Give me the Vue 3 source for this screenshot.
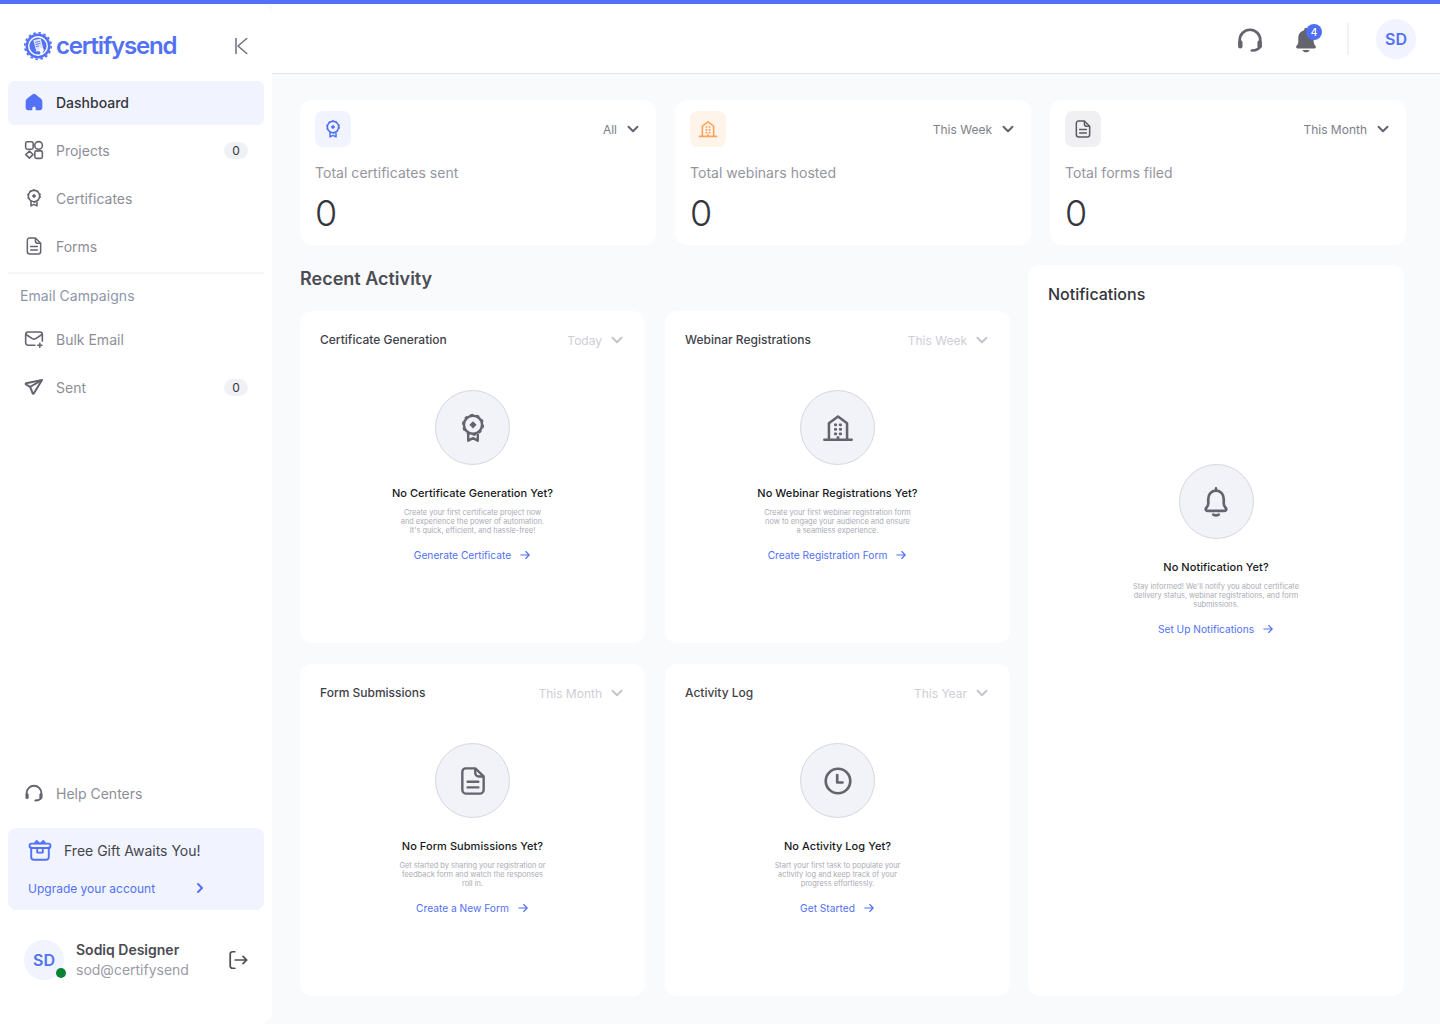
<script setup>
const mainNav = [
  { label: 'Dashboard', icon: 'i-home', active: true },
  { label: 'Projects', icon: 'i-grid', badge: '0' },
  { label: 'Certificates', icon: 'i-seal' },
  { label: 'Forms', icon: 'i-doc' },
]
const mailNav = [
  { label: 'Bulk Email', icon: 'i-mail' },
  { label: 'Sent', icon: 'i-plane', badge: '0' },
]
const stats = [
  { label: 'Total certificates sent', range: 'All', icon: 'i-seal', tone: 'blue' },
  { label: 'Total webinars hosted', range: 'This Week', icon: 'i-building', tone: 'orange' },
  { label: 'Total forms filed', range: 'This Month', icon: 'i-doc', tone: 'grey' },
]
const panels = [
  { title: 'Certificate Generation', range: 'Today', icon: 'i-seal', heading: 'No Certificate Generation Yet?',
    lines: ['Create your first certificate project now', 'and experience the power of automation.', "It's quick, efficient, and hassle-free!"], link: 'Generate Certificate' },
  { title: 'Webinar Registrations', range: 'This Week', icon: 'i-building', heading: 'No Webinar Registrations Yet?',
    lines: ['Create your first webinar registration form', 'now to engage your audience and ensure', 'a seamless experience.'], link: 'Create Registration Form' },
  { title: 'Form Submissions', range: 'This Month', icon: 'i-doc', heading: 'No Form Submissions Yet?',
    lines: ['Get started by sharing your registration or', 'feedback form and watch the responses', 'roll in.'], link: 'Create a New Form' },
  { title: 'Activity Log', range: 'This Year', icon: 'i-clock', heading: 'No Activity Log Yet?',
    lines: ['Start your first task to populate your', 'activity log and keep track of your', 'progress effortlessly.'], link: 'Get Started' },
]
const notice = {
  icon: 'i-bell', heading: 'No Notification Yet?',
  lines: ['Stay informed! We\'ll notify you about certificate', 'delivery status, webinar registrations, and form', 'submissions.'], link: 'Set Up Notifications',
}
</script>

<template>
  <div class="app">
    <svg class="sprite" xmlns="http://www.w3.org/2000/svg">
      <symbol id="i-home" viewBox="0 0 24 24">
        <path fill="currentColor" d="M10.400 2.600 3.900 7.800C2.700 8.700 2 10.100 2 11.600V19c0 1.700 1.300 3 3 3h5v-2.500a2 2 0 0 1 4 0V22h5c1.700 0 3-1.300 3-3v-7.400c0-1.500-.7-2.900-1.900-3.800l-6.500-5.200a2.600 2.600 0 0 0-3.200 0Z" />
      </symbol>
      <symbol id="i-grid" viewBox="0 0 24 24">
        <g fill="none" stroke="currentColor" stroke-width="1.900">
          <rect x="2" y="2" width="9" height="9" rx="2" />
          <circle cx="17.500" cy="6.500" r="4.600" />
          <path d="M6.500 13.200 10.800 17.500 6.500 21.800 2.200 17.500Z" stroke-linejoin="round" />
          <rect x="13" y="13" width="9" height="9" rx="2" />
        </g>
      </symbol>
      <symbol id="i-seal" viewBox="0 0 24 24">
        <g fill="none" stroke="currentColor">
          <circle cx="12" cy="9.600" r="6.800" stroke-width="1.900" />
          <circle cx="12" cy="9.600" r="7.700" stroke-width="1.200" stroke-dasharray="2.400 2.440" />
          <path d="M8.400 16.400V21.500L12 19.600l3.600 1.900v-5.100" stroke-width="1.800" stroke-linejoin="round" />
        </g>
        <path fill="currentColor" d="M12 6.900 14.700 9.600 12 12.300 9.300 9.600Z" />
      </symbol>
      <symbol id="i-doc" viewBox="0 0 24 24">
        <path fill="none" stroke="currentColor" stroke-width="1.800" stroke-linejoin="round" d="M6.500 2.500h7.200L20 8.600V18.500a3 3 0 0 1-3 3H7a3 3 0 0 1-3-3V5a2.500 2.500 0 0 1 2.500-2.500Z" />
        <path fill="none" stroke="currentColor" stroke-width="1.800" stroke-linejoin="round" d="M13.700 2.500V6a2.600 2.600 0 0 0 2.600 2.600H20" />
        <path fill="none" stroke="currentColor" stroke-width="1.800" stroke-linecap="round" d="M8 12.600h8M8 16.800h8" />
      </symbol>
      <symbol id="i-mail" viewBox="0 0 24 24">
        <g fill="none" stroke="currentColor" stroke-width="1.900" stroke-linecap="round" stroke-linejoin="round">
          <path d="M13 19.500H5a3 3 0 0 1-3-3V6.500a3 3 0 0 1 3-3h14a3 3 0 0 1 3 3v8" />
          <path d="M2.400 6.600 10 11.600a3.600 3.600 0 0 0 4 0l7.600-5" />
          <path d="M19 17v5M16.500 19.500h5" />
        </g>
      </symbol>
      <symbol id="i-plane" viewBox="0 0 24 24">
        <g fill="none" stroke="currentColor" stroke-width="2.400" stroke-linejoin="round">
          <path d="M21.600 3.600 2.600 7.500c-.7.2-.8 1-.2 1.400l5 2.900 3 7.800c.3.700 1.200.7 1.500 0Z" />
          <path d="M7.600 11.700 21.400 3.800" />
        </g>
      </symbol>
      <symbol id="i-headset" viewBox="0 0 24 24">
        <g fill="none" stroke="currentColor" stroke-width="2.300" stroke-linecap="round">
          <path d="M3.200 14.500V12a8.800 8.800 0 0 1 17.600 0v3" />
          <path d="M20.600 17.500c-.8 2-3 3.300-7 3.500" />
        </g>
        <rect x="1.800" y="12.200" width="3.800" height="7" rx="1.900" fill="currentColor" />
        <rect x="18.400" y="12.200" width="3.800" height="7" rx="1.900" fill="currentColor" />
      </symbol>
      <symbol id="i-gift" viewBox="0 0 24 24">
        <g fill="none" stroke="currentColor" stroke-width="1.900" stroke-linejoin="round" stroke-linecap="round">
          <path d="M3.200 9.500V19a2.800 2.800 0 0 0 2.800 2.800h12a2.800 2.800 0 0 0 2.800-2.800V9.500" />
          <rect x="1.600" y="5.600" width="20.800" height="4.400" rx="1.600" />
          <path d="M7 5.400 8.600 3l2.600 2.400M17 5.400 15.400 3l-2.600 2.400" />
          <path d="M9.200 10v4.600h5.600V10" />
        </g>
      </symbol>
      <symbol id="i-logout" viewBox="0 0 24 24">
        <g fill="none" stroke="currentColor" stroke-width="1.900" stroke-linecap="round" stroke-linejoin="round">
          <path d="M8.500 3H6a2.500 2.500 0 0 0-2.500 2.500v13A2.500 2.500 0 0 0 6 21h2.500" />
          <path d="M9 12h12.500M17.500 8l4 4-4 4" />
        </g>
      </symbol>
      <symbol id="i-building" viewBox="0 0 24 24">
        <g fill="none" stroke="currentColor" stroke-width="1.900" stroke-linecap="round" stroke-linejoin="round">
          <path d="M5.200 20.500V8.500L12 3.400l6.800 5.100v12" />
          <path d="M1.800 20.800h20.400" stroke-width="2" />
        </g>
        <g fill="currentColor">
          <rect x="9" y="8.600" width="2.300" height="2" rx=".6" /><rect x="12.700" y="8.600" width="2.300" height="2" rx=".6" />
          <rect x="9" y="12" width="2.300" height="2" rx=".6" /><rect x="12.700" y="12" width="2.300" height="2" rx=".6" />
          <rect x="9" y="15.400" width="2.300" height="2" rx=".6" /><rect x="12.700" y="15.400" width="2.300" height="2" rx=".6" />
          <rect x="11" y="18.200" width="2" height="2.600" />
        </g>
      </symbol>
      <symbol id="i-clock" viewBox="0 0 24 24">
        <g fill="none" stroke="currentColor" stroke-width="2" stroke-linecap="round" stroke-linejoin="round">
          <circle cx="12" cy="12" r="9.200" />
          <path d="M11.400 7.500v5.600h4" />
        </g>
      </symbol>
      <symbol id="i-bell" viewBox="0 0 24 24">
        <g fill="none" stroke="currentColor" stroke-width="2" stroke-linejoin="round" stroke-linecap="round">
          <path d="M12 3.500c-3.600 0-5.800 2.800-5.800 6.200v3.600c0 1.400-.6 2.200-1.500 3.200-.8.900-.3 2.200 1 2.200h12.600c1.300 0 1.800-1.300 1-2.200-.9-1-1.500-1.800-1.500-3.200V9.700c0-3.400-2.200-6.200-5.800-6.200Z" />
          <path d="M12 1.800v1.700M10 21.400c1.300.8 2.700.8 4 0" />
        </g>
      </symbol>
      <symbol id="i-bell-fill" viewBox="0 0 24 24">
        <path fill="currentColor" d="M12 1.500a1.500 1.500 0 0 0-1.500 1.500v.6C7.400 4.400 5.400 7 5.400 10v3.800c0 1.300-.6 2.300-1.500 3.200-.8.900-.3 2.300 1 2.300h14.200c1.300 0 1.800-1.400 1-2.300-.9-.9-1.500-1.900-1.500-3.200V10c0-3-2-5.600-5.100-6.400V3A1.500 1.500 0 0 0 12 1.500Z" />
        <path fill="currentColor" d="M9 20.500h6c-.4 1.300-1.600 2.100-3 2.100s-2.600-.8-3-2.100Z" />
      </symbol>
      <symbol id="i-chev" viewBox="0 0 14 14">
        <path fill="none" stroke="currentColor" stroke-width="2" stroke-linecap="round" stroke-linejoin="round" d="M2.500 4.800 7 9.200l4.500-4.400" />
      </symbol>
      <symbol id="i-arrow" viewBox="0 0 12 12">
        <path fill="none" stroke="currentColor" stroke-width="1.100" stroke-linecap="round" stroke-linejoin="round" d="M1.800 6h8.400M6.700 2.500 10.200 6 6.700 9.500" />
      </symbol>
    </svg>

    <div class="topline"></div>
    <div class="shell">
      <aside class="sidebar">
        <div class="brand">
          <div class="logo">
            <svg class="logo-mark" viewBox="0 0 28 28">
              <circle cx="14" cy="14" r="12.500" fill="#5271f4" />
              <circle cx="14" cy="14" r="13.200" fill="none" stroke="#5271f4" stroke-width="1.600" stroke-dasharray="2.600 2.580" />
              <circle cx="14" cy="14" r="10" fill="#fff" />
              <circle cx="14" cy="14" r="8.600" fill="#5271f4" />
              <path d="M9.300 8.200 16.800 6.500 19.600 18 12.400 19.800Z" fill="#dfe5fe" />
              <path d="M11 10.400l5-1.100M11.500 12.500l5-1.100M12 14.600l3-.7" stroke="#5271f4" stroke-width=".9" />
              <circle cx="17.500" cy="18.200" r="2.200" fill="#fff" />
              <path d="M16.400 20l-.3 3 1.400-.9 1.300.9-.2-3" fill="#fff" />
            </svg>
            <span class="logo-text">certifysend</span>
          </div>
          <svg class="collapse" viewBox="0 0 14 18"><path fill="none" stroke="#6e6f78" stroke-width="1.500" stroke-linecap="round" stroke-linejoin="round" d="M2 1.500v15M12.700 1.500 4 9l8.700 7.500" /></svg>
        </div>

        <nav class="nav">
          <a v-for="item in mainNav" :key="item.label" class="nav-item" :class="{ active: item.active }">
            <svg class="nav-icon"><use :href="'#' + item.icon" /></svg>
            <span class="nav-label">{{ item.label }}</span>
            <span v-if="item.badge" class="badge">{{ item.badge }}</span>
          </a>
        </nav>

        <div class="rule"></div>
        <div class="section-label">Email Campaigns</div>

        <nav class="nav">
          <a v-for="item in mailNav" :key="item.label" class="nav-item">
            <svg class="nav-icon"><use :href="'#' + item.icon" /></svg>
            <span class="nav-label">{{ item.label }}</span>
            <span v-if="item.badge" class="badge">{{ item.badge }}</span>
          </a>
        </nav>

        <div class="side-bottom">
          <a class="nav-item">
            <svg class="nav-icon"><use href="#i-headset" /></svg>
            <span class="nav-label">Help Centers</span>
          </a>
          <div class="promo">
            <div class="promo-top">
              <svg class="promo-icon"><use href="#i-gift" /></svg>
              <span>Free Gift Awaits You!</span>
            </div>
            <div class="promo-link">
              <span>Upgrade your account</span>
              <svg class="promo-chev" viewBox="0 0 10 12"><path fill="none" stroke="currentColor" stroke-width="2" stroke-linecap="round" stroke-linejoin="round" d="M3 2l4 4-4 4" /></svg>
            </div>
          </div>
          <div class="user">
            <div class="avatar">SD<span class="online"></span></div>
            <div class="user-text">
              <div class="user-name">Sodiq Designer</div>
              <div class="user-mail">sod@certifysend</div>
            </div>
            <svg class="logout"><use href="#i-logout" /></svg>
          </div>
        </div>
      </aside>

      <div class="main">
        <header class="header">
          <svg class="head-icon"><use href="#i-headset" /></svg>
          <div class="bell">
            <svg class="head-icon"><use href="#i-bell-fill" /></svg>
            <span class="bell-count">4</span>
          </div>
          <div class="head-rule"></div>
          <div class="avatar">SD</div>
        </header>

        <div class="content">
          <section class="stats">
            <article v-for="s in stats" :key="s.label" class="stat">
              <div class="stat-top">
                <div class="stat-icon" :class="s.tone"><svg><use :href="'#' + s.icon" /></svg></div>
                <div class="stat-range">
                  <span>{{ s.range }}</span>
                  <svg class="chev"><use href="#i-chev" /></svg>
                </div>
              </div>
              <div class="stat-label">{{ s.label }}</div>
              <div class="stat-value">0</div>
            </article>
          </section>

          <section class="lower">
            <div class="activity">
              <h2 class="activity-title">Recent Activity</h2>
              <div class="panels">
                <article v-for="p in panels" :key="p.title" class="panel">
                  <div class="panel-head">
                    <span class="panel-title">{{ p.title }}</span>
                    <span class="panel-range">
                      <span>{{ p.range }}</span>
                      <svg class="chev"><use href="#i-chev" /></svg>
                    </span>
                  </div>
                  <div class="empty">
                    <div class="empty-circle"><svg><use :href="'#' + p.icon" /></svg></div>
                    <div class="empty-title">{{ p.heading }}</div>
                    <p class="empty-text"><span v-for="l in p.lines" :key="l">{{ l }}</span></p>
                    <a class="empty-link">{{ p.link }}<svg><use href="#i-arrow" /></svg></a>
                  </div>
                </article>
              </div>
            </div>

            <aside class="notify">
              <h2 class="notify-title">Notifications</h2>
              <div class="empty notify-empty">
                <div class="empty-circle"><svg><use :href="'#' + notice.icon" /></svg></div>
                <div class="empty-title">{{ notice.heading }}</div>
                <p class="empty-text"><span v-for="l in notice.lines" :key="l">{{ l }}</span></p>
                <a class="empty-link">{{ notice.link }}<svg><use href="#i-arrow" /></svg></a>
              </div>
            </aside>
          </section>
        </div>
      </div>
    </div>
  </div>
</template>

<style scoped>
.app {
  width: 1440px;
  height: 1024px;
  overflow: hidden;
  background: #f9fafc;
  font-family: Inter, "Liberation Sans", sans-serif;
  color: #2e2f36;
}
.sprite { display: none; }
.topline { height: 4px; background: #5271f4; }
.shell { display: flex; height: 1020px; }

/* Sidebar */
.sidebar {
  width: 272px;
  flex: none;
  background: #fff;
  border-radius: 0 12px 12px 0;
  padding: 28px 8px 44px;
  box-sizing: border-box;
  display: flex;
  flex-direction: column;
}
.brand {
  height: 28px;
  margin-bottom: 21px;
  padding: 0 16px;
  display: flex;
  align-items: center;
  justify-content: space-between;
}
.logo { display: flex; align-items: center; gap: 4px; }
.logo-mark { width: 28px; height: 28px; flex: none; overflow: visible; }
.logo-text {
  font-size: 24px;
  font-weight: 600;
  letter-spacing: -1.200px;
  color: #5271f4;
  line-height: 28px;
}
.collapse { width: 14px; height: 18px; }
.nav { display: flex; flex-direction: column; gap: 4px; }
.nav-item {
  height: 44px;
  box-sizing: border-box;
  padding: 0 16px 2px;
  border-radius: 6px;
  display: flex;
  align-items: center;
  gap: 12px;
  font-size: 14px;
  color: #8d8e98;
}
.nav-item.active {
  background: #f1f4fe;
  color: #34353c;
  font-weight: 500;
}
.nav-icon { width: 20px; height: 20px; flex: none; color: #63646d; }
.active .nav-icon { color: #5271f4; }
.nav-label { flex: 1; }
.badge {
  width: 24px;
  height: 17px;
  line-height: 17px;
  border-radius: 9px;
  background: #f0f1f5;
  color: #34353c;
  font-size: 12px;
  text-align: center;
}
.rule { height: 2px; background: #f5f5f7; margin-top: 3px; }
.section-label {
  height: 20px;
  line-height: 20px;
  margin: 12px 0 12px;
  padding-left: 12px;
  font-size: 14px;
  letter-spacing: 0.05px;
  color: #8d96a8;
}
.side-bottom { margin-top: auto; display: flex; flex-direction: column; }
.promo {
  margin-top: 12px;
  height: 82px;
  box-sizing: border-box;
  border-radius: 8px;
  background: #f1f4fe;
  padding: 10px 20px 0;
}
.promo-top {
  display: flex;
  align-items: center;
  gap: 12px;
  height: 24px;
  font-size: 14px;
  color: #44454d;
}
.promo-icon { width: 24px; height: 24px; color: #5271f4; flex: none; }
.promo-link {
  margin-top: 16px;
  height: 20px;
  display: flex;
  align-items: center;
  font-size: 12px;
  color: #5271f4;
}
.promo-chev { width: 10px; height: 12px; margin-left: 40px; }
.user {
  margin-top: 30px;
  padding: 0 16px;
  display: flex;
  align-items: center;
}
.avatar {
  position: relative;
  width: 40px;
  height: 40px;
  flex: none;
  border-radius: 50%;
  background: #f1f4fe;
  color: #5271f4;
  font-size: 16px;
  font-weight: 600;
  display: flex;
  align-items: center;
  justify-content: center;
}
.online {
  position: absolute;
  right: -2px;
  bottom: 2px;
  width: 10px;
  height: 10px;
  border-radius: 50%;
  background: #0a8337;
}
.user-text { flex: 1; margin-left: 12px; }
.user-name { font-size: 14px; font-weight: 600; line-height: 20px; color: #4a4b53; }
.user-mail { font-size: 14px; line-height: 20px; color: #9a9ba5; }
.logout { width: 22px; height: 22px; color: #4d4e56; flex: none; margin-right: -1px; }

/* Header */
.main { flex: 1; min-width: 0; }
.header {
  height: 70px;
  box-sizing: border-box;
  background: #fff;
  border-bottom: 1px solid #e6e7ea;
  padding-right: 24px;
  display: flex;
  align-items: center;
  justify-content: flex-end;
}
.head-icon { width: 28px; height: 28px; color: #63646d; display: block; margin-top: 2px; }
.bell { position: relative; margin-left: 28px; }
.bell-count {
  position: absolute;
  top: 0;
  right: -2px;
  width: 16px;
  height: 16px;
  border-radius: 50%;
  background: #4f6ef7;
  color: #fff;
  font-size: 10px;
  font-weight: 500;
  line-height: 16px;
  text-align: center;
}
.head-rule { width: 2px; height: 32px; background: #f0f1f3; margin: 0 27px; }

/* Content */
.content { padding: 26px 34px 0 28px; }
.stats { display: grid; grid-template-columns: repeat(3, 356px); gap: 19px; }
.stat {
  height: 145px;
  box-sizing: border-box;
  background: #fff;
  border-radius: 12px;
  padding: 11px 16px 0 15px;
}
.stat-top { display: flex; align-items: center; justify-content: space-between; height: 36px; }
.stat-icon {
  width: 36px;
  height: 36px;
  border-radius: 8px;
  display: flex;
  align-items: center;
  justify-content: center;
}
.stat-icon svg { width: 20px; height: 20px; }
.blue { background: #f1f4fe; color: #5271f4; }
.orange { background: #fff4ea; color: #f9a45a; }
.grey { background: #f0f0f2; color: #5a5b64; }
.stat-range {
  display: flex;
  align-items: center;
  gap: 9px;
  font-size: 12px;
  color: #7d7e88;
}
.chev { width: 14px; height: 14px; color: #63646d; flex: none; }
.stat-label {
  margin-top: 16px;
  height: 20px;
  line-height: 20px;
  font-size: 14px;
  letter-spacing: 0.03px;
  color: #94959f;
}
.stat-value { margin-top: 10px; font-size: 36px; font-weight: 350; line-height: 40px; color: #35363c; }

.lower { display: flex; margin-top: 20px; }
.activity { width: 710px; flex: none; }
.activity-title {
  margin: 0 0 18px;
  height: 28px;
  line-height: 28px;
  font-size: 18px;
  font-weight: 600;
  color: #4b4c54;
}
.panels { display: grid; grid-template-columns: 345px 345px; grid-auto-rows: 332px; column-gap: 20px; row-gap: 21px; }
.panel { background: #fff; border-radius: 12px; padding: 20px 20px 0; }
.panel-head { display: flex; align-items: center; justify-content: space-between; height: 16px; }
.panel-title { font-size: 12px; font-weight: 500; color: #41424a; }
.panel-range { display: flex; align-items: center; gap: 8px; padding-top: 2px; font-size: 12px; color: #cdced6; }
.panel-range .chev { color: #c4c5ce; margin-right: 1px; }
.empty { display: flex; flex-direction: column; align-items: center; text-align: center; margin-top: 43px; }
.empty-circle {
  width: 75px;
  height: 75px;
  box-sizing: border-box;
  border-radius: 50%;
  background: #f2f3f9;
  border: 1px solid #d6d7de;
  display: flex;
  align-items: center;
  justify-content: center;
  color: #63646d;
}
.empty-circle svg { width: 32px; height: 32px; }
.empty-title {
  margin-top: 21px;
  height: 14px;
  line-height: 14px;
  font-size: 11px;
  font-weight: 500;
  letter-spacing: 0.05px;
  color: #17181c;
}
.empty-text {
  margin: 8px 0 0;
  font-size: 7.400px;
  line-height: 9px;
  color: #aaabb4;
}
.empty-text span { display: block; }
.empty-link {
  margin-top: 13px;
  height: 14px;
  display: flex;
  align-items: center;
  gap: 8px;
  font-size: 10.200px;
  color: #5271f4;
}
.empty-link svg { width: 12px; height: 12px; flex: none; }

.notify {
  width: 376px;
  height: 731px;
  box-sizing: border-box;
  margin-left: 18px;
  background: #fff;
  border-radius: 12px;
  padding: 18px 20px 0;
}
.notify-title { margin: 0; height: 22px; line-height: 22px; font-size: 16px; font-weight: 500; color: #34353c; }
.notify-empty { margin-top: 159px; }
</style>

<style>
html, body { margin: 0; background: #f9fafc; }
</style>
